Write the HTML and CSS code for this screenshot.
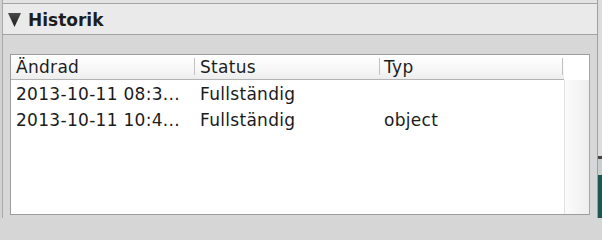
FILE: index.html
```html
<!DOCTYPE html>
<html lang="sv">
<head>
<meta charset="utf-8">
<title>Historik</title>
<link rel="stylesheet" href="styles.css">
</head>
<body>
<div class="frame">
  <div class="edge-left"></div>
  <div class="panel">
    <div class="top-strip"></div>
    <div class="titlebar">
      <svg class="disclosure" width="13" height="14" viewBox="0 0 13 14" aria-hidden="true">
        <defs>
          <linearGradient id="tri" x1="0" y1="0" x2="0" y2="1">
            <stop offset="0" stop-color="#4a4a4a"/>
            <stop offset="1" stop-color="#1e1e1e"/>
          </linearGradient>
        </defs>
        <polygon points="0,0 13,0 6.5,14" fill="url(#tri)"/>
      </svg>
      <span class="title">Historik</span>
    </div>
    <div class="content">
      <div class="table">
        <div class="grid">
          <div class="head">
            <div class="hcell c1">Ändrad</div>
            <div class="hcell c2">Status</div>
            <div class="hcell c3">Typ</div>
          </div>
          <div class="rows">
            <div class="row">
              <div class="cell c1">2013-10-11 08:3...</div>
              <div class="cell c2">Fullständig</div>
              <div class="cell c3"></div>
            </div>
            <div class="row">
              <div class="cell c1">2013-10-11 10:4...</div>
              <div class="cell c2">Fullständig</div>
              <div class="cell c3">object</div>
            </div>
          </div>
        </div>
        <div class="scroll">
          <div class="scroll-head"></div>
          <div class="scroll-track"></div>
        </div>
      </div>
    </div>
  </div>
  <div class="edge-right">
    <div class="er-top"></div>
    <div class="er-mark"></div>
    <div class="er-mid"></div>
    <div class="er-desk"></div>
  </div>
</div>
</body>
</html>
```
FILE: styles.css
```css
html, body {
  margin: 0;
  padding: 0;
  background: #d6d6d6;
}
body {
  width: 602px;
  height: 218px;
  overflow: hidden;
  font-family: "DejaVu Sans", "Liberation Sans", sans-serif;
  color: #1b1b1b;
}
.frame {
  display: flex;
  width: 602px;
  height: 218px;
}
.edge-left {
  width: 2px;
  background: #d2d2d2;
  border-right: 1px solid #a9a9a9;
}
.panel {
  flex: 1;
  display: flex;
  flex-direction: column;
  background: #d7d7d7;
}
.top-strip {
  height: 3px;
  background: #e3e3e3;
  border-bottom: 1px solid #a4a4a4;
}
.titlebar {
  box-sizing: border-box;
  height: 31px;
  background: #eaeaea;
  border-bottom: 1px solid #a3a3a3;
  display: flex;
  align-items: center;
  padding-left: 5px;
}
.disclosure {
  display: block;
  margin-top: 2px;
}
.title {
  font-weight: bold;
  font-size: 17px;
  margin-left: 7px;
  padding-top: 2px;
  color: #1d1d1d;
}
.content {
  flex: 1;
  padding: 19px 7px 3px 7px;
  display: flex;
  flex-direction: column;
}
.table {
  flex: 1;
  display: flex;
  background: #fff;
  border: 1px solid #9c9c9c;
  border-right-color: #a6a6a6;
}
.grid {
  width: 553px;
  display: flex;
  flex-direction: column;
  font-size: 17px;
  letter-spacing: 0.3px;
}
.head {
  display: flex;
  height: 24px;
  border-bottom: 1px solid #b3b3b3;
  background: linear-gradient(#ffffff, #f7f7f7 60%, #ededed);
}
.hcell {
  line-height: 24px;
  position: relative;
  color: #1e1e1e;
}
.hcell::after {
  content: "";
  position: absolute;
  right: 0;
  top: 3px;
  height: 17px;
  width: 1px;
  background: #c2c2c2;
}
.c1 { width: 184px; padding-left: 5px; box-sizing: border-box; }
.c2 { width: 185px; padding-left: 5px; box-sizing: border-box; }
.c3 { width: 183px; padding-left: 4px; box-sizing: border-box; }
.rows {
  padding-top: 1px;
}
.row {
  display: flex;
  height: 26px;
}
.cell {
  line-height: 26px;
  white-space: nowrap;
  overflow: hidden;
}
.scroll {
  flex: 1;
  display: flex;
  flex-direction: column;
}
.scroll-head {
  height: 25px;
  background: #fff;
}
.scroll-track {
  flex: 1;
  border-left: 1px solid #e0e0e0;
  background: linear-gradient(to right, #fbfbfb, #f5f5f5 50%, #eeeeee);
}
.edge-right {
  width: 4px;
  border-left: 1px solid #a0a0a0;
  display: flex;
  flex-direction: column;
}
.er-top {
  height: 156px;
  background: #dcdcdc;
}
.er-mark {
  height: 3px;
  background: #454545;
}
.er-mid {
  height: 16px;
  background: #c9cfcf;
}
.er-desk {
  flex: 1;
  background: #1f5553;
}
```
